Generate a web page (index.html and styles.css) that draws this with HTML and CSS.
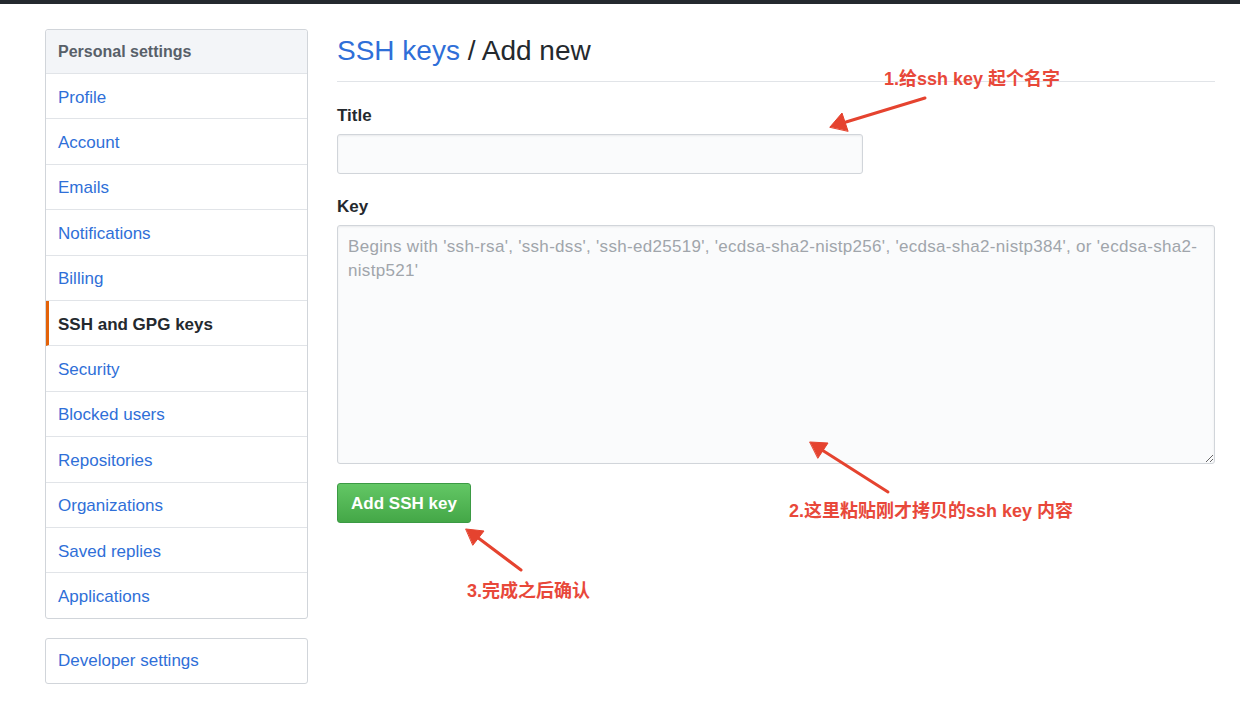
FILE: index.html
```html
<!DOCTYPE html>
<html lang="zh">
<head>
<meta charset="utf-8">
<title>SSH keys / Add new</title>
<link rel="stylesheet" href="styles.css">
</head>
<body>
<div class="topbar"></div>
<div class="page">
  <nav class="sidebar">
    <div class="menu">
      <div class="menu-heading">Personal settings</div>
      <a class="menu-item" href="#">Profile</a>
      <a class="menu-item" href="#">Account</a>
      <a class="menu-item" href="#">Emails</a>
      <a class="menu-item" href="#">Notifications</a>
      <a class="menu-item" href="#">Billing</a>
      <a class="menu-item selected" href="#">SSH and GPG keys</a>
      <a class="menu-item" href="#">Security</a>
      <a class="menu-item" href="#">Blocked users</a>
      <a class="menu-item" href="#">Repositories</a>
      <a class="menu-item" href="#">Organizations</a>
      <a class="menu-item" href="#">Saved replies</a>
      <a class="menu-item last" href="#">Applications</a>
    </div>
    <div class="menu dev">
      <a class="menu-item last" href="#">Developer settings</a>
    </div>
  </nav>
  <main class="main">
    <h2 class="subhead"><a href="#">SSH keys</a> / Add new</h2>
    <form class="form">
      <label class="label" for="title">Title</label>
      <input class="input title-input" id="title" type="text">
      <label class="label key-label" for="key">Key</label>
      <textarea class="input key-input" id="key" placeholder="Begins with 'ssh-rsa', 'ssh-dss', 'ssh-ed25519', 'ecdsa-sha2-nistp256', 'ecdsa-sha2-nistp384', or 'ecdsa-sha2-nistp521'"></textarea>
      <div class="actions"><button class="btn" type="button">Add SSH key</button></div>
    </form>
  </main>
</div>

<div class="note note1">1.给ssh key 起个名字</div>
<div class="note note2">2.这里粘贴刚才拷贝的ssh key 内容</div>
<div class="note note3">3.完成之后确认</div>
<svg class="arrows" width="1240" height="705" viewBox="0 0 1240 705">
  <g stroke="#e5432f" stroke-width="3" stroke-linecap="round" fill="#e5432f">
    <line x1="925" y1="98" x2="846" y2="122"/>
    <polygon points="830,127 842,113 848,131" stroke-width="1"/>
    <line x1="888" y1="492" x2="822" y2="450"/>
    <polygon points="810,442 828,443 818,458" stroke-width="1"/>
    <line x1="521" y1="570" x2="477" y2="537"/>
    <polygon points="466,529 484,531 473,545" stroke-width="1"/>
  </g>
</svg>
</body>
</html>
```

FILE: styles.css
```css
* { box-sizing: border-box; }

body {
  margin: 0;
  background: #fff;
  font-family: "Liberation Sans", "Noto Sans CJK SC", sans-serif;
  color: #24292e;
  position: relative;
  width: 1240px;
  height: 705px;
  overflow: hidden;
}

.topbar {
  height: 4px;
  background: #24292e;
}

.page {
  display: flex;
  gap: 29px;
  padding: 25px 0 0 45px;
}

.sidebar {
  width: 263px;
  flex: none;
  display: flex;
  flex-direction: column;
  gap: 19px;
}

.menu {
  border: 1px solid #d1d5da;
  border-radius: 3px;
  background: #fff;
  display: flex;
  flex-direction: column;
}

.menu-heading {
  height: 44px;
  display: flex;
  align-items: center;
  padding-left: 12px;
  background: #f3f5f8;
  border-bottom: 1px solid #e1e4e8;
  font-size: 16px;
  font-weight: bold;
  color: #586069;
  border-radius: 3px 3px 0 0;
}

.menu-item {
  height: 45.4px;
  display: flex;
  align-items: center;
  padding: 3px 0 0 12px;
  border-bottom: 1px solid #e1e4e8;
  font-size: 17px;
  color: #2f6fd8;
  text-decoration: none;
}

.menu-item.last { border-bottom: 0; height: 44.4px; }

.menu-item.selected {
  color: #24292e;
  font-weight: bold;
  border-left: 3px solid #e36209;
  padding-left: 9px;
}

.dev .menu-item { height: 44px; padding-top: 1px; }

.main {
  width: 878px;
  flex: none;
}

.subhead {
  margin: 4px 0 0;
  padding-bottom: 12px;
  border-bottom: 1px solid #e1e4e8;
  font-size: 28px;
  line-height: 36px;
  font-weight: normal;
  color: #24292e;
}

.subhead a {
  color: #2f6fd8;
  text-decoration: none;
}

.form {
  display: flex;
  flex-direction: column;
  padding-top: 24px;
}

.label {
  font-size: 17px;
  font-weight: bold;
  line-height: 20px;
  margin-bottom: 8px;
}

.key-label { margin-top: 23px; }

.input {
  border: 1px solid #d1d5da;
  border-radius: 3px;
  background: #fafbfc;
  box-shadow: inset 0 1px 2px rgba(27,31,35,0.075);
  font-family: "Liberation Sans", sans-serif;
  font-size: 17px;
  color: #24292e;
}

.title-input {
  width: 526px;
  height: 40px;
  padding: 6px 10px;
}

.key-input {
  width: 878px;
  height: 239px;
  padding: 9px 10px;
  line-height: 24px;
  letter-spacing: 0.3px;
  resize: vertical;
}

.key-input::placeholder { color: #a0a5ab; }

.actions { padding-top: 19px; }

.btn {
  width: 134px;
  height: 40px;
  border: 1px solid #3b9a44;
  border-radius: 3px;
  background: linear-gradient(#63c765, #44a747);
  color: #fff;
  font-family: "Liberation Sans", sans-serif;
  font-size: 17px;
  font-weight: bold;
  padding: 2px 0 0;
}

.arrows {
  position: absolute;
  left: 0;
  top: 0;
  pointer-events: none;
}

.note {
  position: absolute;
  font-family: "Liberation Sans", "Noto Sans CJK SC", sans-serif;
  font-weight: bold;
  font-size: 18px;
  line-height: 22px;
  color: #e8483a;
  white-space: nowrap;
}

.note1 { left: 884px; top: 68px; }
.note2 { left: 789px; top: 500px; }
.note3 { left: 467px; top: 580px; }
```
